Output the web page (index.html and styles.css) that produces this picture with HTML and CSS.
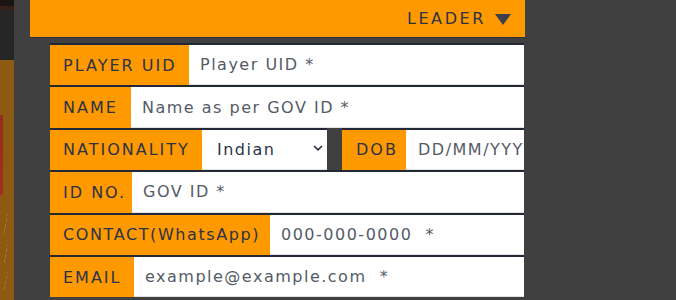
FILE: index.html
```html
<!DOCTYPE html>
<html lang="en">
<head>
<meta charset="utf-8">
<title>Team registration</title>
<link rel="stylesheet" href="styles.css">
</head>
<body>
  <div class="strip"></div>
  <main class="panel">
    <div class="header">
      <span class="header-title">LEADER</span>
      <svg class="caret" width="16" height="11" viewBox="0 0 16 11"><polygon points="0,0 16,0 8,11" fill="#3a3f4b"/></svg>
    </div>
    <form class="form">
      <div class="row">
        <label class="label w-uid">PLAYER UID</label>
        <input class="field" type="text" placeholder="Player UID *">
      </div>
      <div class="row">
        <label class="label w-name">NAME</label>
        <input class="field" type="text" placeholder="Name as per GOV ID *">
      </div>
      <div class="row">
        <label class="label w-nat">NATIONALITY</label>
        <span class="select-wrap">
          <select class="select"><option>Indian</option></select>
          <svg class="chev" width="10" height="6" viewBox="0 0 10 6"><polyline points="1,1 5,4.8 9,1" fill="none" stroke="#2c3347" stroke-width="1.7"/></svg>
        </span>
        <span class="gap"></span>
        <label class="label label-dob">DOB</label>
        <input class="field field-dob" type="text" placeholder="DD/MM/YYYY">
      </div>
      <div class="row">
        <label class="label w-id">ID NO.</label>
        <input class="field" type="text" placeholder="GOV ID *">
      </div>
      <div class="row">
        <label class="label w-contact">CONTACT(WhatsApp)</label>
        <input class="field" type="text" placeholder="000-000-0000  *">
      </div>
      <div class="row">
        <label class="label w-email">EMAIL</label>
        <input class="field" type="text" placeholder="example@example.com  *">
      </div>
    </form>
  </main>
</body>
</html>
```

FILE: styles.css
```css
html, body {
  margin: 0;
  padding: 0;
}
body {
  background: #404040;
  display: flex;
  height: 300px;
  overflow: hidden;
  font-family: "DejaVu Sans", sans-serif;
}
.strip {
  width: 14px;
  flex: none;
  background:
    linear-gradient(100deg, transparent 0 40%, rgba(210,170,110,0.35) 40% 44%, transparent 44%) 0 215px / 14px 20px no-repeat,
    linear-gradient(100deg, transparent 0 40%, rgba(210,170,110,0.35) 40% 44%, transparent 44%) 0 245px / 14px 20px no-repeat,
    linear-gradient(100deg, transparent 0 40%, rgba(210,170,110,0.3) 40% 44%, transparent 44%) 0 272px / 14px 20px no-repeat,
    linear-gradient(#962c1c, #a03020) 0 115px / 3px 80px no-repeat,
    linear-gradient(#1a1513 0 6px, #3a1e18 6px 10px, #262626 10px 60px, #8c5a12 60px 100%);
}
.panel {
  margin-left: 16px;
  width: 495px;
  flex: none;
}
.header {
  height: 37px;
  background: #ff9900;
  border-bottom: 1px solid #2b3040;
  display: flex;
  align-items: center;
  justify-content: flex-end;
  padding-right: 14px;
  gap: 9px;
}
.header-title {
  font-size: 16px;
  letter-spacing: 2.6px;
  color: #2c3347;
}
.caret {
  display: block;
  margin-top: 1px;
}
.form {
  margin: 5px 0 0 20px;
  width: 474px;
}
.row {
  display: flex;
  height: 42.4px;
}
.label, .field, .select-wrap {
  box-sizing: border-box;
  height: 100%;
  border-top: 2px solid #222836;
}
.label {
  flex: none;
  display: flex;
  align-items: center;
  padding: 0 0 0 13px;
  background: #ff9900;
  color: #2c3347;
  font-size: 16px;
  letter-spacing: 2px;
  white-space: nowrap;
  overflow: hidden;
}
.w-uid { width: 139px; }
.w-name { width: 81px; }
.w-nat { width: 152px; }
.w-id { width: 82px; }
.w-contact { width: 220px; letter-spacing: 1.6px; }
.w-email { width: 84px; }
.field {
  flex: 1;
  min-width: 0;
  margin: 0;
  border-left: 0;
  border-right: 0;
  border-bottom: 1px solid #e2e2e2;
  background: #fff;
  padding: 0 0 0 11px;
  font-family: "DejaVu Sans", sans-serif;
  font-size: 16px;
  letter-spacing: 1.5px;
  color: #2c3347;
  outline: none;
}
.field::placeholder {
  color: #555b66;
  opacity: 1;
}
.select-wrap {
  position: relative;
  width: 125px;
  flex: none;
  background: #fff;
  border-bottom: 1px solid #e2e2e2;
}
.select {
  appearance: none;
  -webkit-appearance: none;
  width: 100%;
  height: 100%;
  border: 0;
  margin: 0;
  background: transparent;
  padding: 0 0 0 15px;
  font-family: "DejaVu Sans", sans-serif;
  font-size: 16px;
  letter-spacing: 1.5px;
  color: #2c3347;
  outline: none;
}
.chev {
  position: absolute;
  right: 4px;
  top: 15px;
  pointer-events: none;
}
.gap {
  width: 15px;
  flex: none;
}
.label-dob {
  width: 64px;
  padding-left: 14px;
}
.field-dob {
  padding-left: 12px;
}
```
